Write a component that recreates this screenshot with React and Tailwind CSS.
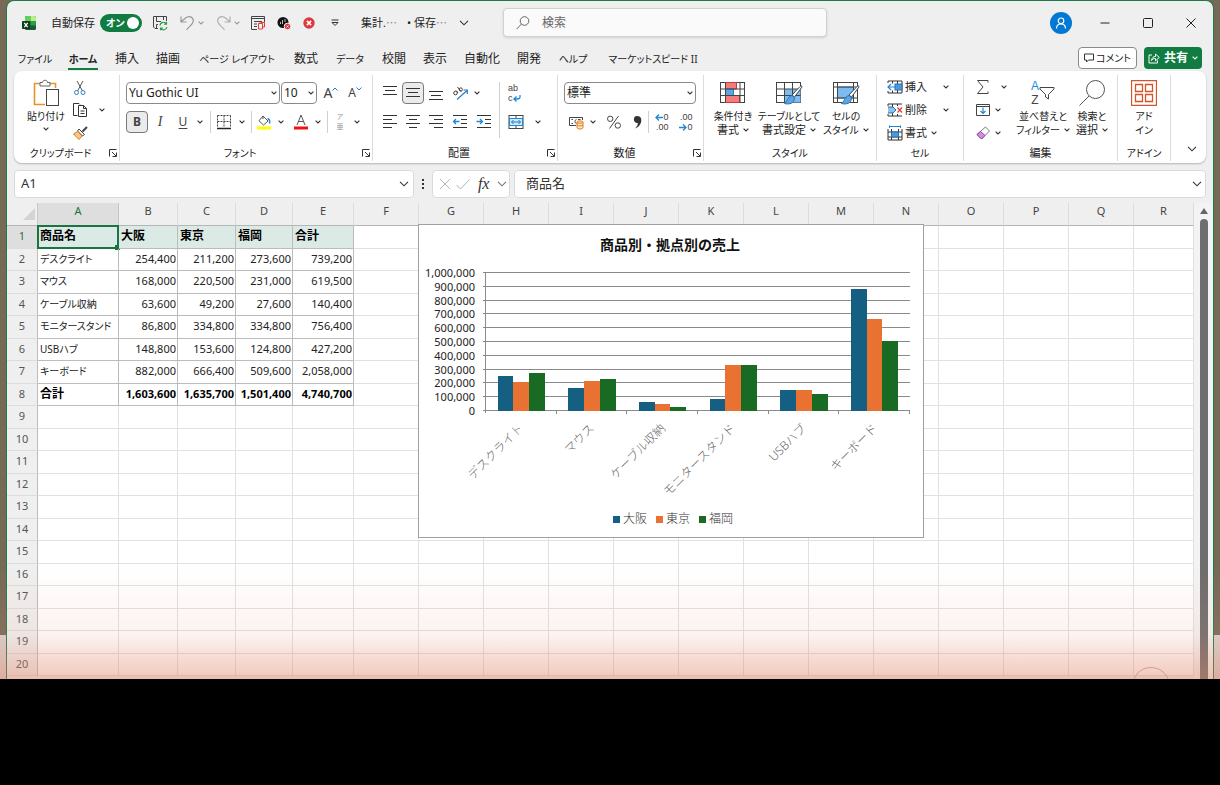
import React, { useState } from 'react';

const TABS = [
  { label: 'ファイル', width: 'w-8' },
  { label: 'ホーム', width: 'w-[30px]', active: true },
  { label: '挿入', width: 'w-6' },
  { label: '描画', width: 'w-6' },
  { label: 'ページ レイアウト', width: 'w-20' },
  { label: '数式', width: 'w-6' },
  { label: 'データ', width: 'w-[30px]' },
  { label: '校閲', width: 'w-6' },
  { label: '表示', width: 'w-6' },
  { label: '自動化', width: 'w-9' },
  { label: '開発', width: 'w-6' },
  { label: 'ヘルプ', width: 'w-[30px]' },
  { label: 'マーケットスピード II', width: 'w-24' },
];

const COLUMNS = 'ABCDEFGHIJKLMNOPQR'.split('');

const SHEET = [
  ['商品名', '大阪', '東京', '福岡', '合計'],
  ['デスクライト', 254400, 211200, 273600, 739200],
  ['マウス', 168000, 220500, 231000, 619500],
  ['ケーブル収納', 63600, 49200, 27600, 140400],
  ['モニタースタンド', 86800, 334800, 334800, 756400],
  ['USBハブ', 148800, 153600, 124800, 427200],
  ['キーボード', 882000, 666400, 509600, 2058000],
  ['合計', 1603600, 1635700, 1501400, 4740700],
];

const ROW_COUNT = 20;
const SERIES = [
  { name: '大阪', color: '#156082' },
  { name: '東京', color: '#e97132' },
  { name: '福岡', color: '#196b24' },
];

const format = (n) => n.toLocaleString('en-US');
const hasKana = (text) => /[ぁ-ー]/.test(text);
// kana captions are set a size smaller than kanji ones
const captionSize = (text) => (hasKana(text) ? 'text-[10px]' : 'text-[11px]');

/* ---------- small pieces ---------- */

function Svg({ className = 'w-4 h-4', box = '0 0 16 16', children }) {
  return (
    <svg className={`shrink-0 ${className}`} viewBox={box} fill="none" stroke="#444" strokeWidth={1} aria-hidden="true">
      {children}
    </svg>
  );
}

function Chevron({ large = false, color = '#333' }) {
  return (
    <svg
      className={large ? 'w-[10px] h-[6px] shrink-0' : 'w-[6px] h-[4px] shrink-0'}
      viewBox={large ? '0 0 10 6' : '0 0 6 4'}
      fill="none"
      stroke={color}
      aria-hidden="true"
    >
      <path d={large ? 'M1 0.8 L5 4.8 L9 0.8' : 'M0.6 0.6 L3 3 L5.4 0.6'} strokeWidth="1.1" />
    </svg>
  );
}

function Tool({ label, className = 'w-6 h-[22px]', pressed = false, children }) {
  return (
    <button
      type="button"
      aria-label={label}
      className={`flex shrink-0 items-center justify-center ${className} ${
        pressed ? 'rounded border border-[#7a7a7a] bg-[#ebebeb]' : ''
      }`}
    >
      {children}
    </button>
  );
}

function More({ label, className = 'w-3 h-[22px]', color }) {
  return (
    <Tool label={label} className={className}>
      <Chevron color={color} />
    </Tool>
  );
}

function Group({ title, width, launcher = false, children }) {
  return (
    <section className={`flex shrink-0 flex-col pb-0.5 pt-1 ${width}`} aria-label={title}>
      <div className="flex min-h-0 flex-1 border-r border-[#dcdcdc]">{children}</div>
      <div className="flex h-4 shrink-0 items-center border-r border-[#dcdcdc]">
        <span className={`flex-1 text-center leading-4 ${captionSize(title)}`}>{title}</span>
        {launcher && (
          <Tool label={`${title}の設定`} className="w-3 h-4">
            <Svg className="h-2 w-2" box="0 0 8 8">
              <path d="M0.5 7.5 V0.5 H7.5 M3 3 L7 7 M7.5 3.5 V7.5 H3.5" stroke="#333" />
            </Svg>
          </Tool>
        )}
      </div>
    </section>
  );
}

function Combo({ label, value, className }) {
  return (
    <div className={`relative h-[22px] ${className}`}>
      <select
        aria-label={label}
        className="block h-full w-full appearance-none rounded border border-[#8a8a8a] bg-white pl-0.5 text-xs leading-4 text-[#222]"
      >
        <option>{value}</option>
      </select>
      <span className="pointer-events-none absolute inset-y-0 right-[3px] flex items-center">
        <Chevron />
      </span>
    </div>
  );
}

function BigButton({ icon, lines, width, chevron = true }) {
  return (
    <button type="button" className={`flex shrink-0 flex-col items-center pt-1 ${width}`}>
      <span className="flex h-7 items-center justify-center">{icon}</span>
      <span className={`mt-0.5 whitespace-nowrap leading-[14px] ${captionSize(lines[0])}`}>{lines[0]}</span>
      <span className={`flex items-center gap-1 whitespace-nowrap leading-[14px] ${captionSize(lines[1])}`}>
        {lines[1]}
        {chevron && <Chevron />}
      </span>
    </button>
  );
}

function Divider({ className = 'h-[22px]' }) {
  return <span className={`w-px shrink-0 bg-[#d0d0d0] ${className}`} />;
}

function Lines({ rows }) {
  return (
    <Svg>
      {rows.map(([x1, x2, y]) => (
        <path key={y} d={`M${x1} ${y} H${x2}`} stroke="#333" />
      ))}
    </Svg>
  );
}

/* ---------- title bar ---------- */

function Ellipsis() {
  return <span className="font-['Noto_Sans_CJK_JP',sans-serif] text-[#888] [font-feature-settings:normal]">…</span>;
}

function TitleBar() {
  const [autoSave, setAutoSave] = useState(true);

  return (
    <header className="flex h-[43px] items-center">
      <div className="flex w-[496px] shrink-0 items-center pl-3.5">
        <Svg className="h-4 w-4">
          <rect x="4" y="1" width="11" height="14" rx="1.5" fill="#185c37" stroke="none" />
          <path d="M5.500 1 H9.500 V6 H4 V2.500 A1.500 1.500 0 0 1 5.500 1Z" fill="#5fd35a" stroke="none" />
          <path d="M9.500 1 H13.500 A1.500 1.500 0 0 1 15 2.500 V6 H9.500Z" fill="#b5f08a" stroke="none" />
          <rect x="9.500" y="6" width="5.500" height="4.500" fill="#2f9e3f" stroke="none" />
          <rect x="1" y="6" width="8" height="8" rx="1" fill="#0a3d22" stroke="none" />
          <path d="M3.300 7.800 L6.700 12.200 M6.700 7.800 L3.300 12.200" stroke="#fff" strokeWidth="1.300" />
        </Svg>
        <label htmlFor="autosave" className="ml-3.5 w-11 whitespace-nowrap text-[11px] leading-4">
          自動保存
        </label>
        <span className="relative ml-[5px] flex h-[18px] w-[42px] items-center rounded-full bg-[#107c41] pl-1.5">
          <input
            id="autosave"
            type="checkbox"
            checked={autoSave}
            onChange={(e) => setAutoSave(e.target.checked)}
            className="absolute inset-0 h-full w-full appearance-none rounded-full"
          />
          <span className="text-[10px] font-bold leading-4 text-white">オン</span>
          <span className="ml-auto mr-[3px] h-3 w-3 rounded-full bg-white" />
        </span>

        <Tool label="上書き保存" className="ml-2.5 h-5 w-4">
          <Svg>
            <path d="M6 13.500 H3 L1.500 12 V1.500 H14.500 V6 M4.500 1.500 V6.500 H9 M11.500 1.500 V5 M4.500 13 V9.500 H6" />
            <path d="M8 10.500 A3.500 3.500 0 0 1 14.500 9 M14.500 6.800 V9.200 H12 M15 12 A3.500 3.500 0 0 1 8.700 13.300 M8.500 15.300 V13 H11" stroke="#2b9a4b" strokeWidth="1.200" />
          </Svg>
        </Tool>
        <Tool label="元に戻す" className="ml-3 h-5 w-4">
          <Svg>
            <path d="M1 1.500 V7 H6.500 M1.200 6.800 L5.500 3 C8.500 0.500 13 1.500 13.300 5.500 C13.500 9 10 10.500 6.500 15" stroke="#999" strokeWidth="1.200" />
          </Svg>
        </Tool>
        <More label="元に戻す履歴" className="h-[22px] w-2.5" color="#999" />
        <Tool label="やり直し" className="ml-2.5 h-5 w-4">
          <Svg>
            <path d="M14 1.500 V7 H8.500 M13.800 6.800 L9.500 3 C6.500 0.500 2 1.500 1.700 5.500 C1.500 9 5 10.500 8.500 15" stroke="#b0b0b0" strokeWidth="1.200" />
          </Svg>
        </Tool>
        <More label="やり直し履歴" className="h-[22px] w-2.5" color="#999" />
        <Tool label="フォーム" className="ml-2 h-5 w-4">
          <Svg>
            <path d="M7 14.500 H1.500 V1.500 H14.500 V7 M1.500 3.500 H14.500 M4 6.500 H12 M4 9 H7 M4 11.500 H7" />
            <path d="M8.500 8.500 H12.500 V14 H8.500Z M10 8.500 V7 M12.500 12 H14.500 V7.500 H11" stroke="#e03c3c" />
          </Svg>
        </Tool>
        <Tool label="マクロの記録" className="ml-[11px] h-5 w-[14px]">
          <Svg className="h-[14px] w-[14px]" box="0 0 14 14">
            <circle cx="6" cy="6.500" r="5.500" fill="#111" stroke="none" />
            <path d="M3.500 6 V8 M5.500 4 V8 M8 3 V6" stroke="#bbb" />
            <circle cx="10.500" cy="10.500" r="3.300" fill="#d9363e" stroke="#efefef" />
            <path d="M9.500 9.500 L11.500 11.500 M11.500 9.500 L9.500 11.500" stroke="#fff" strokeWidth="0.800" />
          </Svg>
        </Tool>
        <Tool label="中止" className="ml-3 h-5 w-3">
          <Svg className="h-3 w-3" box="0 0 12 12">
            <circle cx="6" cy="6" r="5.700" fill="#dc3a3f" stroke="none" />
            <path d="M3.900 3.900 L8.100 8.100 M8.100 3.900 L3.900 8.100" stroke="#fff" strokeWidth="1.600" />
          </Svg>
        </Tool>
        <Tool label="クイック アクセスのカスタマイズ" className="ml-4 h-5 w-2">
          <Svg className="h-2 w-2" box="0 0 8 8">
            <path d="M0.500 1 H7.500 M1 3.500 H7 L4 6.500Z" stroke="#333" />
          </Svg>
        </Tool>
        <div className="ml-[22px] flex w-[86px] items-center justify-between whitespace-nowrap text-[11px] leading-4">
          <span>集計.<Ellipsis /></span>
          <span>• 保存<Ellipsis /></span>
        </div>
        <Tool label="ファイル情報" className="ml-3 h-5 w-[10px]">
          <Chevron large />
        </Tool>
      </div>

      <label className="flex h-[29px] w-[324px] shrink-0 items-center gap-3 rounded border border-[#d1d1d1] bg-[#fafafa] pl-3 shadow-sm">
        <Svg className="h-[14px] w-[14px]" box="0 0 14 14">
          <circle cx="8.500" cy="5" r="4.300" stroke="#666" />
          <path d="M5.500 8 L0.700 13" stroke="#666" />
        </Svg>
        <input
          type="text"
          placeholder="検索"
          aria-label="検索"
          className="min-w-0 flex-1 bg-transparent text-xs text-[#333] outline-none placeholder:text-[#666]"
        />
      </label>

      <div className="flex flex-1 items-center justify-end pr-px">
        <button type="button" aria-label="アカウント" className="mr-[11px] flex h-[22px] w-[22px] items-center justify-center rounded-full bg-[#0078d4]">
          <Svg className="h-3 w-3" box="0 0 12 12">
            <circle cx="6" cy="3.800" r="2.800" stroke="#fff" strokeWidth="1.200" />
            <path d="M1.500 11.500 C1.500 8 3.500 7 6 7 C8.500 7 10.500 8 10.500 11.500" stroke="#fff" strokeWidth="1.200" />
          </Svg>
        </button>
        <Tool label="最小化" className="h-8 w-[43px]">
          <Svg className="h-[10px] w-[10px]" box="0 0 10 10"><path d="M0.500 5 H9.500" stroke="#222" /></Svg>
        </Tool>
        <Tool label="元のサイズに戻す" className="h-8 w-[43px]">
          <Svg className="h-[10px] w-[10px]" box="0 0 10 10"><rect x="0.500" y="0.500" width="9" height="9" rx="1" stroke="#222" /></Svg>
        </Tool>
        <Tool label="閉じる" className="h-8 w-[43px]">
          <Svg className="h-[10px] w-[10px]" box="0 0 10 10"><path d="M0.500 0.500 L9.500 9.500 M9.500 0.500 L0.500 9.500" stroke="#222" /></Svg>
        </Tool>
      </div>
    </header>
  );
}

function TabRow() {
  return (
    <div className="flex h-[27px] items-center pl-3 pr-[11px]">
      <nav className="flex flex-1 items-center gap-[17px]">
        {TABS.map((tab) => (
          <button
            key={tab.label}
            type="button"
            className={`flex h-6 shrink-0 items-center justify-center whitespace-nowrap border-b-2 pt-1 leading-4 ${tab.width} ${
              tab.active ? 'border-[#107c41] font-bold' : 'border-transparent'
            } ${hasKana(tab.label) ? 'text-[10px]' : 'text-xs'}`}
          >
            {tab.label}
          </button>
        ))}
      </nav>
      <button
        type="button"
        className="flex h-[22px] w-[59px] items-center justify-center gap-0.5 whitespace-nowrap rounded border border-[#8a8a8a] bg-white text-[10px] leading-4"
      >
        <Svg className="h-[10px] w-[10px]" box="0 0 10 10">
          <path d="M0.500 1 H9.500 V7 H4.500 L2.500 9 V7 H0.500Z" stroke="#333" />
        </Svg>
        コメント
      </button>
      <button
        type="button"
        className="ml-[7px] flex h-[22px] w-[58px] items-center justify-center gap-1 whitespace-nowrap rounded bg-[#107c41] text-xs leading-4 font-bold text-white"
      >
        <Svg className="h-3 w-3" box="0 0 12 12">
          <path d="M4 3 H1 V11 H9.500 V8.500 M3.500 8.500 C4 5.500 5.500 4.500 7.500 4.500 V2 L11.300 5.500 L7.500 8.800 V6.500 C5.500 6.500 4.500 7 3.500 8.500Z" stroke="#fff" />
        </Svg>
        共有
        <Chevron color="#fff" />
      </button>
    </div>
  );
}

/* ---------- ribbon ---------- */

function GridIcon({ children }) {
  return (
    <Svg className="h-[26px] w-7" box="0 0 28 26">
      <rect x="1.500" y="2.500" width="24" height="20" fill="#fff" />
      {children}
    </Svg>
  );
}

function Brush() {
  return (
    <>
      <path d="M27 7 L19.500 17 L17 15 L25 6.500 C26 5.500 27.500 6 27 7Z" fill="#fff" stroke="#444" />
      <path d="M16.800 15.500 C19 16 20 18 19 20.500 C17.500 24 13 24.500 9.500 23.500 C12.500 22 12 17 16.800 15.500Z" fill="#5ea4e0" stroke="#2a6fb0" />
    </>
  );
}

function ClipboardGroup() {
  return (
    <Group title="クリップボード" width="w-[106px]" launcher>
      <button type="button" className="ml-2 flex w-12 flex-col items-center pt-1">
        <Svg className="h-7 w-7" box="0 0 28 28">
          <path d="M8 4.500 H2.500 V25.500 H13 M18 4.500 H23.500 V9" stroke="#e8912d" strokeWidth="1.600" />
          <path d="M8 7 V3.500 H10.500 C10.500 0.500 15.500 0.500 15.500 3.500 H18 V7Z" fill="#fff" stroke="#666" />
          <rect x="14.500" y="10.500" width="12" height="16" fill="#fff" stroke="#444" />
        </Svg>
        <span className="mt-0.5 whitespace-nowrap text-[10px] leading-[14px]">貼り付け</span>
        <span className="mt-1 flex"><Chevron /></span>
      </button>
      <div className="flex flex-col pt-0.5">
        <Tool label="切り取り" className="h-[22px] w-5">
          <Svg>
            <path d="M5 1 L10.500 11 M11 1 L5.500 11" stroke="#555" />
            <circle cx="4.500" cy="12.500" r="2" stroke="#2a7fc9" />
            <circle cx="11" cy="12.500" r="2" stroke="#2a7fc9" />
          </Svg>
        </Tool>
        <span className="flex items-center">
          <Tool label="コピー" className="h-[22px] w-5">
            <Svg>
              <path d="M5.500 13.500 H1.500 V1.500 H7 L8 2.500" stroke="#333" />
              <path d="M6.500 3.500 H11.500 L14.500 6.500 V14.500 H6.500Z M11.500 3.500 V6.500 H14.500 M8.500 9 H12.500 M8.500 11.500 H12.500" stroke="#333" />
            </Svg>
          </Tool>
          <More label="コピーのオプション" className="ml-1.5 h-[22px] w-3" />
        </span>
        <Tool label="書式のコピー" className="h-6 w-5">
          <Svg>
            <path d="M15 2 L10.500 6.500" stroke="#444" strokeWidth="2" />
            <path d="M7 4 L12.500 9.500 L10.500 11 L5.500 6Z" fill="#fff" stroke="#444" />
            <path d="M5.500 6.500 L1.500 9 L7 14.500 L10 11Z" fill="#f7c78b" stroke="#e07b1a" />
          </Svg>
        </Tool>
      </div>
    </Group>
  );
}

function FontGroup() {
  return (
    <Group title="フォント" width="w-[253px]" launcher>
      <div className="flex flex-col gap-[7px] pl-[6px] pt-[7px]">
        <div className="flex items-center">
          <Combo label="フォント名" value="Yu Gothic UI" className="w-[154px]" />
          <Combo label="フォント サイズ" value="10" className="ml-px w-9" />
          <Tool label="フォント サイズの拡大" className="ml-1 h-[22px] w-5">
            <span className="text-sm leading-5 text-[#444]">A</span>
            <Svg className="mb-2 h-1 w-[6px]" box="0 0 6 4"><path d="M0.500 3.500 L3 1 L5.500 3.500" stroke="#2a7fc9" /></Svg>
          </Tool>
          <Tool label="フォント サイズの縮小" className="ml-1 h-[22px] w-5">
            <span className="text-xs leading-5 text-[#444]">A</span>
            <Svg className="mb-2 h-1 w-[6px]" box="0 0 6 4"><path d="M0.500 0.500 L3 3 L5.500 0.500" stroke="#2a7fc9" /></Svg>
          </Tool>
        </div>
        <div className="flex items-center">
          <Tool label="太字" pressed className="h-[22px] w-[22px]">
            <span className="text-xs font-bold text-[#444]">B</span>
          </Tool>
          <Tool label="斜体">
            <span className="font-['Liberation_Serif',serif] text-sm italic text-[#444]">I</span>
          </Tool>
          <Tool label="下線" className="h-[22px] w-[22px]">
            <span className="text-xs text-[#444] underline underline-offset-2">U</span>
          </Tool>
          <More label="下線の種類" />
          <span className="w-1" />
          <Divider />
          <Tool label="罫線" className="ml-px h-[22px] w-6">
            <Svg>
              <path d="M1.500 1.500 H14.500 M1.500 1.500 V13 M14.500 1.500 V13 M8 1.500 V13 M1.500 7.500 H14.500" stroke="#444" strokeDasharray="2 1" />
              <path d="M1 14.500 H15" stroke="#222" strokeWidth="1.500" />
            </Svg>
          </Tool>
          <More label="罫線の種類" />
          <span className="w-[3px]" />
          <Divider />
          <Tool label="塗りつぶしの色">
            <Svg>
              <path d="M7 2 L12 7 L7.500 11 L3 6.800Z M7 2 V5" stroke="#555" />
              <path d="M11.500 4.500 C13.500 5 14 7 13.500 9.500" stroke="#2a7fc9" strokeWidth="1.500" />
              <rect x="1" y="12.500" width="14" height="3" fill="#ffff00" stroke="none" />
            </Svg>
          </Tool>
          <More label="塗りつぶしの色の一覧" className="h-[22px] w-2.5" />
          <Tool label="フォントの色" className="ml-[3px] h-[22px] w-6">
            <Svg>
              <path d="M4 11 L8 1 L12 11 M5.300 7.500 H10.700" stroke="#555" />
              <rect x="1" y="12.500" width="14" height="3" fill="#ee1111" stroke="none" />
            </Svg>
          </Tool>
          <More label="フォントの色の一覧" className="h-[22px] w-2.5" />
          <span className="w-1" />
          <Divider />
          <Tool label="ふりがな">
            <span className="flex flex-col text-[7px] leading-[10px] text-[#999]">
              <span>ア</span>
              <span>亜</span>
            </span>
          </Tool>
          <More label="ふりがなの設定" className="h-[22px] w-2.5" />
        </div>
      </div>
    </Group>
  );
}

function AlignmentGroup() {
  return (
    <Group title="配置" width="w-[185px]" launcher>
      <div className="flex flex-col gap-[7px] pl-[6px] pt-[7px]">
        <div className="flex items-center gap-px">
          <Tool label="上揃え" className="h-[22px] w-[22px]"><Lines rows={[[1, 15, 1.5], [3, 13, 5.5], [1, 15, 9.5]]} /></Tool>
          <Tool label="上下中央揃え" pressed className="h-[22px] w-[22px]"><Lines rows={[[1, 15, 3.5], [3, 13, 7.5], [1, 15, 11.5]]} /></Tool>
          <Tool label="下揃え" className="h-[22px] w-[22px]"><Lines rows={[[1, 15, 6.5], [3, 13, 10.5], [1, 15, 14.5]]} /></Tool>
          <Tool label="方向">
            <Svg>
              <g stroke="#444">
                <circle cx="3.500" cy="8" r="1.800" />
                <path d="M4 5.500 L6 8" />
                <path d="M5.500 2 L9 6.500" />
                <circle cx="8.800" cy="4.500" r="1.600" />
              </g>
              <path d="M5 14.500 L15 5.500 M11.500 5 H15.300 V9" stroke="#2a7fc9" strokeWidth="1.200" />
            </Svg>
          </Tool>
          <More label="方向の一覧" className="h-[22px] w-2" />
        </div>
        <div className="flex items-center gap-px">
          <Tool label="左揃え" className="h-[22px] w-[22px]"><Lines rows={[[1, 15, 1.5], [1, 10, 5.5], [1, 15, 9.5], [1, 10, 13.5]]} /></Tool>
          <Tool label="中央揃え" className="h-[22px] w-[22px]"><Lines rows={[[1, 15, 1.5], [4, 12, 5.5], [1, 15, 9.5], [4, 12, 13.5]]} /></Tool>
          <Tool label="右揃え" className="h-[22px] w-[22px]"><Lines rows={[[1, 15, 1.5], [6, 15, 5.5], [1, 15, 9.5], [6, 15, 13.5]]} /></Tool>
          <Tool label="インデントを減らす">
            <Svg>
              <path d="M1 1.500 H15 M9 5.500 H15 M9 9.500 H15 M1 13.500 H15" stroke="#333" />
              <path d="M1.500 7.500 H7.500 M4 5 L1.500 7.500 L4 10" stroke="#1e88d8" strokeWidth="1.300" />
            </Svg>
          </Tool>
          <Tool label="インデントを増やす" className="h-[22px] w-[22px]">
            <Svg>
              <path d="M1 1.500 H15 M9 5.500 H15 M9 9.500 H15 M1 13.500 H15" stroke="#333" />
              <path d="M0.500 7.500 H6.500 M4 5 L6.500 7.500 L4 10" stroke="#1e88d8" strokeWidth="1.300" />
            </Svg>
          </Tool>
        </div>
      </div>
      <div className="ml-1 flex items-center"><Divider className="h-14" /></div>
      <div className="flex flex-col gap-[7px] pl-1 pt-[7px]">
        <Tool label="折り返して全体を表示する">
          <span className="flex w-4 flex-col items-start font-['Liberation_Sans',sans-serif] text-[9px] leading-[10px] text-[#444]">
            <span>ab</span>
            <span className="flex items-center">
              c
              <Svg className="h-[7px] w-2" box="0 0 8 7"><path d="M7 0 V2 C7 4 5.500 4 1 4 M3.500 1.500 L1 4 L3.500 6.500" stroke="#1e88d8" strokeWidth="1.300" /></Svg>
            </span>
          </span>
        </Tool>
        <span className="flex items-center">
          <Tool label="セルを結合して中央揃え">
            <Svg>
              <rect x="1" y="1.500" width="14" height="13" fill="#fff" stroke="#444" />
              <path d="M8 1.500 V4 M8 12 V14.500" />
              <rect x="1.500" y="4.500" width="13" height="7" fill="#d3e9fa" stroke="#1e88d8" />
              <path d="M3.500 8 H12.500 M5.500 6 L3.500 8 L5.500 10 M10.500 6 L12.500 8 L10.500 10" stroke="#1e78c0" />
            </Svg>
          </Tool>
          <More label="結合の種類" className="ml-1 h-[22px] w-3" />
        </span>
      </div>
    </Group>
  );
}

function NumberGroup() {
  const digits =
    "flex flex-col items-end font-['Liberation_Sans',sans-serif] text-[9px] leading-[10px] text-[#444]";
  return (
    <Group title="数値" width="w-[146px]" launcher>
      <div className="flex flex-col gap-[7px] pl-[6px] pt-[7px]">
        <Combo label="表示形式" value="標準" className="w-[132px]" />
        <div className="flex items-center">
          <Tool label="通貨表示形式">
            <Svg>
              <path d="M8 11.500 H1.500 V3.500 H14.500 V6" stroke="#444" />
              <path d="M3.500 5.500 H5 M3.500 9.500 H5 M8.500 5.500 C6.500 5.500 6.500 9.500 8.500 9.500 M10 5.500 H12.500" stroke="#444" />
              <path d="M9 8 V13.500 C9 15.500 15 15.500 15 13.500 V8 C15 6.500 9 6.500 9 8 C9 9.500 15 9.500 15 8 M9 10.800 C9 12.200 15 12.200 15 10.800" fill="#fde5cc" stroke="#e07b1a" />
            </Svg>
          </Tool>
          <More label="通貨の種類" className="h-[22px] w-[10px]" />
          <Tool label="パーセント スタイル" className="ml-1 h-[22px] w-6">
            <Svg>
              <circle cx="4.200" cy="4.800" r="2.700" />
              <circle cx="11.800" cy="11.500" r="2.700" />
              <path d="M12.500 2 L3.500 14.500" />
            </Svg>
          </Tool>
          <Tool label="桁区切りスタイル" className="h-[22px] w-[22px]">
            <Svg>
              <path d="M8 2 C12 2 13 5 12 8.500 C11 11.500 9 13.500 6 14.500 C8 12.500 9 11 8.800 9 C4 9.500 3.500 2 8 2Z" fill="#333" stroke="none" />
            </Svg>
          </Tool>
          <Divider />
          <Tool label="小数点以下の表示桁数を増やす" className="ml-0.5 h-[22px] w-[22px]">
            <span className={digits}>
              <span className="flex items-center">
                <Svg className="h-[7px] w-2" box="0 0 8 7"><path d="M8 3.500 H1 M4 0.500 L1 3.500 L4 6.500" stroke="#1e88d8" strokeWidth="1.300" /></Svg>
                0
              </span>
              <span>.00</span>
            </span>
          </Tool>
          <Tool label="小数点以下の表示桁数を減らす" className="ml-0.5 h-[22px] w-[22px]">
            <span className={digits}>
              <span>.00</span>
              <span className="flex items-center">
                <Svg className="h-[7px] w-2" box="0 0 8 7"><path d="M0 3.500 H7 M4 0.500 L7 3.500 L4 6.500" stroke="#1e88d8" strokeWidth="1.300" /></Svg>
                0
              </span>
            </span>
          </Tool>
        </div>
      </div>
    </Group>
  );
}

function StyleGroup() {
  return (
    <Group title="スタイル" width="w-[173px]">
      <BigButton
        width="w-[58px]"
        lines={['条件付き', '書式']}
        icon={
          <GridIcon>
            <path d="M6.500 2.500 H17.500 V9 H6.500Z M6.500 15.500 H20.500 V22.500 H6.500Z" fill="#f47c7c" stroke="#d13438" />
            <rect x="6.500" y="9" width="8" height="6.500" fill="#5ea4e0" stroke="#2a7fc9" />
            <path d="M1.500 9 H25.500 M1.500 15.500 H25.500 M6.500 2.500 V22.500 M21 2.500 V22.500" />
          </GridIcon>
        }
      />
      <BigButton
        width="w-[54px]"
        lines={['テーブルとして', '書式設定']}
        icon={
          <GridIcon>
            <path d="M9.500 9 H25.500 V22.500 H9.500Z" fill="#7dbbf0" stroke="none" />
            <path d="M1.500 9 H25.500 M1.500 15.500 H25.500 M9.500 2.500 V22.500 M17.500 2.500 V22.500" />
            <Brush />
          </GridIcon>
        }
      />
      <BigButton
        width="w-[60px]"
        lines={['セルの', 'スタイル']}
        icon={
          <GridIcon>
            <path d="M5.500 7 H21.500 V18 H5.500Z" fill="#7dbbf0" stroke="#2a7fc9" />
            <path d="M1.500 7 H25.500 M1.500 18 H25.500 M5.500 2.500 V22.500 M21.500 2.500 V22.500" />
            <Brush />
          </GridIcon>
        }
      />
    </Group>
  );
}

function CellsGroup() {
  const row = 'flex h-[23px] items-center text-[11px] leading-4 whitespace-nowrap';
  return (
    <Group title="セル" width="w-[87px]">
      <div className="flex flex-col pl-[10px]">
        <button type="button" className={row}>
          <Svg>
            <path d="M1 2 H15 M1 14 H15 M15 2 V14 M1 2 V4 M1 12 V14 M5.500 2 V4.500 M10.500 2 V14 M5.500 11.500 V14" stroke="#333" />
            <rect x="8" y="5" width="7" height="6" fill="#4a9be0" stroke="#2a6fb0" />
            <path d="M8 8 H1 M4 5 L1 8 L4 11" stroke="#1e88d8" strokeWidth="1.200" />
          </Svg>
          <span className="ml-0.5 w-[38px] text-left">挿入</span>
          <Chevron />
        </button>
        <button type="button" className={row}>
          <Svg>
            <path d="M1 2 H15 M1 14 H15 M1 2 V4 M1 12 V14 M5.500 2 V5 M10.500 2 V4 M5.500 11 V14 M10.500 12 V14" stroke="#333" />
            <path d="M1 5 H6 L9 8 L6 11 H1" fill="#8cc3ee" stroke="#2a6fb0" />
            <path d="M10.500 5.500 L15 10.500 M15 5.500 L10.500 10.500" stroke="#e03c3c" strokeWidth="1.200" />
          </Svg>
          <span className="ml-0.5 w-[38px] text-left">削除</span>
          <Chevron />
        </button>
        <button type="button" className={row}>
          <Svg>
            <path d="M1 4 V15 H15 V4 M1 7 H15 M1 12 H15 M4.500 4 V15 M11.500 4 V15" stroke="#333" />
            <rect x="4.500" y="7" width="7" height="5" fill="#4a9be0" stroke="#2a6fb0" />
            <path d="M2.500 1.500 H13.500 M2.500 0.500 V3 M13.500 0.500 V3" stroke="#1e88d8" />
          </Svg>
          <span className="ml-0.5 w-[26px] text-left">書式</span>
          <Chevron />
        </button>
      </div>
    </Group>
  );
}

function EditGroup() {
  return (
    <Group title="編集" width="w-[154px]">
      <div className="flex w-[50px] flex-col pl-[7px]">
        <span className="flex h-[23px] items-center">
          <Tool label="オート SUM">
            <Svg><path d="M13 3.500 V1.500 H2.500 L8 8 L2.500 14.500 H13 V12.500" stroke="#444" /></Svg>
          </Tool>
          <More label="集計の種類" className="ml-[3px] h-[22px] w-3" />
        </span>
        <span className="flex h-[23px] items-center">
          <Tool label="フィル">
            <Svg>
              <path d="M1.500 2.500 H14.500 V13.500 H1.500Z M1.500 4.500 H14.500" stroke="#444" />
              <path d="M8 5.500 V11.500 M5.500 9 L8 11.500 L10.500 9" stroke="#1e88d8" strokeWidth="1.200" />
            </Svg>
          </Tool>
          <More label="フィルの種類" className="h-[22px] w-1.5" />
        </span>
        <span className="flex h-[23px] items-center">
          <Tool label="クリア">
            <Svg>
              <path d="M10.500 2 L14.500 6 L6.500 14 L2 9.500Z" fill="#fff" stroke="#777" />
              <path d="M5.500 6.500 L10 10.500 L6.500 14 L2 9.500Z" fill="#cf8fdc" stroke="#9b3fb0" />
            </Svg>
          </Tool>
          <More label="クリアの種類" className="h-[22px] w-1.5" />
        </span>
      </div>
      <BigButton
        width="w-[58px]"
        lines={['並べ替えと', 'フィルター']}
        icon={
          <span className="flex items-center">
            <span className="flex flex-col font-['Liberation_Sans',sans-serif] text-xs leading-[14px]">
              <span className="text-[#1e88d8]">A</span>
              <span className="text-[#444]">Z</span>
            </span>
            <Svg><path d="M1 2.500 H15 V4 L9.500 9.500 V14 L6.500 12 V9.500 L1 4Z" stroke="#444" /></Svg>
          </span>
        }
      />
      <BigButton
        width="w-10"
        lines={['検索と', '選択']}
        icon={
          <Svg className="h-7 w-7" box="0 0 28 28">
            <circle cx="17.500" cy="10.500" r="9" stroke="#555" />
            <path d="M11 17 L1.500 26.500" stroke="#555" />
          </Svg>
        }
      />
    </Group>
  );
}

function Ribbon() {
  return (
    <div className="mx-[7px] flex h-[92px] rounded-lg bg-white shadow-[0_1px_2px_rgba(0,0,0,0.25)]">
      <ClipboardGroup />
      <FontGroup />
      <AlignmentGroup />
      <NumberGroup />
      <StyleGroup />
      <CellsGroup />
      <EditGroup />
      <Group title="アドイン" width="w-[53px]">
        <BigButton
          width="w-[52px]"
          chevron={false}
          lines={['アド', 'イン']}
          icon={
            <Svg className="h-[26px] w-[26px]" box="0 0 26 26">
              <path d="M0.500 0.500 H25.500 V25.500 H0.500Z M4.500 4.500 H11.500 V11.500 H4.500Z M14.500 4.500 H21.500 V11.500 H14.500Z M4.500 14.500 H11.500 V21.500 H4.500Z M14.500 14.500 H21.500 V21.500 H14.500Z" stroke="#d4552b" strokeWidth="1.300" />
            </Svg>
          }
        />
      </Group>
      <div className="flex flex-1 items-end justify-end pb-[9px] pr-[9px]">
        <Tool label="リボンを折りたたむ" className="h-[10px] w-[10px]">
          <Chevron large />
        </Tool>
      </div>
    </div>
  );
}

/* ---------- formula bar ---------- */

function FormulaBar() {
  const [formula, setFormula] = useState('商品名');
  const box = 'flex items-center rounded border border-[#dadada] bg-white';

  return (
    <div className="mx-[7px] mt-[7px] flex h-7">
      <div className={`${box} w-[400px] shrink-0 pl-1.5 pr-1`}>
        <input type="text" aria-label="名前ボックス" defaultValue="A1" className="min-w-0 flex-1 text-[13px] text-[#333] outline-none" />
        <Tool label="名前の一覧" className="h-5 w-[10px]">
          <Chevron large />
        </Tool>
      </div>
      <span className="flex w-[18px] shrink-0 items-center justify-center">
        <Svg className="h-[10px] w-[2px]" box="0 0 2 10">
          <path d="M1 0 V2 M1 4 V6 M1 8 V10" stroke="#333" strokeWidth="2" />
        </Svg>
      </span>
      <div className={`${box} w-[78px] shrink-0 justify-between pl-1.5 pr-0.5`}>
        <Tool label="キャンセル" className="h-5 w-3">
          <Svg className="h-3 w-3" box="0 0 12 12"><path d="M1 1 L11 11 M11 1 L1 11" stroke="#b5b5b5" /></Svg>
        </Tool>
        <Tool label="入力" className="h-5 w-[14px]">
          <Svg className="h-[14px] w-[14px]" box="0 0 14 14"><path d="M0.500 8 L4.500 12 L13.500 2.500" stroke="#b5b5b5" /></Svg>
        </Tool>
        <Tool label="関数の挿入" className="h-5 w-4">
          <span className="font-['Liberation_Serif',serif] text-base leading-5 italic text-[#333]">fx</span>
        </Tool>
        <Chevron large color="#777" />
      </div>
      <div className={`${box} ml-1 min-w-0 flex-1 pl-[11px] pr-[3px]`}>
        <input
          type="text"
          aria-label="数式バー"
          value={formula}
          onChange={(e) => setFormula(e.target.value)}
          className="min-w-0 flex-1 text-[13px] text-[#333] outline-none"
        />
        <Tool label="数式バーの展開" className="h-5 w-[10px]">
          <Chevron large />
        </Tool>
      </div>
    </div>
  );
}

/* ---------- sheet ---------- */

function Chart() {
  const items = SHEET.slice(1, 7);
  const left = 67;
  const right = 491;
  const zero = 186;
  const top = 48;
  const step = (right - left) / items.length;
  const barTop = (v) => Math.round(zero - (v / 1000000) * (zero - top));

  return (
    <figure className="absolute left-[411px] top-[21px] border border-[#a0a0a0] bg-white [font-feature-settings:normal]">
      <svg className="h-[312px] w-[504px]" viewBox="0 0 504 312" role="img" aria-label="商品別・拠点別の売上">
        <text x="251" y="25" textAnchor="middle" className="fill-[#111] text-sm font-bold">
          商品別・拠点別の売上
        </text>
        {Array.from({ length: 11 }, (_, i) => {
          const y = barTop(i * 100000);
          return (
            <g key={i}>
              <path d={`M${left - 3} ${y - 0.5} H${right}`} stroke="#8a8a8a" />
              <text x="56" y={y + 4} textAnchor="end" className="fill-[#222] text-[11px]">
                {format(i * 100000)}
              </text>
            </g>
          );
        })}
        <path d={`M${left - 0.5} ${top} V${zero + 2}`} stroke="#8a8a8a" />
        {items.map(([name, ...values], i) => {
          const x = left + i * step;
          return (
            <g key={name}>
              {SERIES.map((s, k) => {
                const x1 = Math.round(x + 11.5 + k * 15.8);
                const x2 = Math.round(x + 11.5 + (k + 1) * 15.8);
                const y = barTop(values[k]);
                return <rect key={s.name} x={x1} y={y} width={x2 - x1} height={zero - y} fill={s.color} />;
              })}
              <path d={`M${Math.round(x + step) - 0.5} ${zero} V${zero + 3}`} stroke="#8a8a8a" />
              <text
                transform={`translate(${Math.round(x + step / 2) + 3} ${zero + 18}) rotate(-45)`}
                textAnchor="end"
                className="fill-[#666] text-xs font-light"
              >
                {name}
              </text>
            </g>
          );
        })}
        {SERIES.map((s, i) => (
          <g key={s.name}>
            <rect x={194 + i * 43} y="291" width="7" height="7" fill={s.color} />
            <text x={204 + i * 43} y="298" className="fill-[#333] text-xs font-light">
              {s.name}
            </text>
          </g>
        ))}
      </svg>
    </figure>
  );
}

function Cell({ row, col }) {
  const value = SHEET[row]?.[col];

  if (value === undefined) {
    return <td className="border-b border-r border-[#e1e1e1]" />;
  }

  const header = row === 0;
  const strong = header || row === 7;
  const isNumber = typeof value === 'number';
  const size = isNumber ? 'text-[11px]' : hasKana(value) ? 'text-[10px]' : 'text-xs';
  return (
    <td
      className={`relative whitespace-nowrap border-b border-r border-[#bcbcbc] p-0 pb-0.5 leading-4 ${size} ${
        header ? 'bg-[#dceae6]' : ''
      } ${strong ? 'font-bold text-black' : 'text-[#222]'} ${isNumber ? 'pr-px text-right' : 'pl-0.5 text-left'}`}
    >
      {isNumber ? format(value) : value}
      {row === 0 && col === 0 && (
        <span className="pointer-events-none absolute -inset-px border-2 border-[#1a7343]">
          <span className="absolute -bottom-[3px] -right-[3px] h-[5px] w-[5px] bg-[#1a7343]" />
        </span>
      )}
    </td>
  );
}

function Sheet() {
  return (
    <div className="mt-[5px] flex min-h-0 flex-1">
      <div className="relative min-w-0 flex-1 overflow-hidden">
        <table className="w-full table-fixed border-separate border-spacing-0 bg-white">
          <colgroup>
            <col className="w-[31px]" />
            <col className="w-[81px]" />
            <col className="w-[59px]" />
            <col className="w-[58px]" />
            <col className="w-[57px]" />
            <col className="w-[61px]" />
            {COLUMNS.slice(5, 17).map((c) => (
              <col key={c} className="w-[65px]" />
            ))}
            <col />
          </colgroup>
          <thead>
            <tr className="h-[23px] bg-[#efefef]">
              <th className="border-b border-r border-b-[#b5b5b5] border-r-[#c8c8c8] p-0">
                <Svg className="ml-auto mr-0.5 h-3 w-3" box="0 0 12 12">
                  <path d="M12 0 V12 H0Z" fill="#d4d4d4" stroke="none" />
                </Svg>
              </th>
              {COLUMNS.map((c) => (
                <th
                  key={c}
                  scope="col"
                  className={`border-b border-r p-0 pb-1.5 text-[11px] leading-4 font-normal ${
                    c === 'A'
                      ? 'border-b-[#1a7343] border-r-[#c4c4c4] bg-[#dedede] text-[#1a7343]'
                      : 'border-b-[#b5b5b5] border-r-[#dcdcdc] text-[#444]'
                  }`}
                >
                  {c}
                </th>
              ))}
            </tr>
          </thead>
          <tbody>
            {Array.from({ length: ROW_COUNT }, (_, row) => (
              <tr key={row} className="odd:h-[23px] even:h-[22px]">
                <th
                  scope="row"
                  className={`border-b border-r border-b-[#dcdcdc] border-r-[#bcbcbc] p-0 pb-0.5 text-[11px] leading-4 font-normal ${
                    row === 0 ? 'bg-[#dedede] text-[#1a7343]' : 'bg-[#efefef] text-[#555]'
                  }`}
                >
                  {row + 1}
                </th>
                {COLUMNS.map((c, col) => (
                  <Cell key={c} row={row} col={col} />
                ))}
              </tr>
            ))}
          </tbody>
        </table>
        <Chart />
      </div>
      <div className="flex w-[19px] shrink-0 flex-col items-center bg-[#f3f3f3] pt-[5px]">
        <Svg className="h-[6px] w-2" box="0 0 8 6">
          <path d="M4 0 L8 6 H0Z" fill="#666" stroke="none" />
        </Svg>
        <span className="mt-[5px] w-2 flex-1 rounded-t-full bg-[#6e6e6e]" />
      </div>
    </div>
  );
}

export default function App() {
  return (
    <div className="flex h-screen flex-col bg-black font-['Noto_Sans','Noto_Sans_CJK_JP',sans-serif] text-[#222] [font-feature-settings:'palt']">
      <div className="relative flex min-h-0 flex-1 overflow-hidden bg-[linear-gradient(to_bottom,#766a57_calc(100%-44px),#d8d0cd_calc(100%-44px))] px-[6px]">
        <main className="flex min-w-0 flex-1 flex-col overflow-hidden rounded-t-lg border-x border-t border-[#1f7a4a] bg-[#efefef]">
          <TitleBar />
          <TabRow />
          <Ribbon />
          <FormulaBar />
          <Sheet />
        </main>
        {/* warm tint rising from the bottom edge */}
        <div className="pointer-events-none absolute inset-x-0 bottom-0 h-28 overflow-hidden bg-linear-to-b from-[#e89a83]/0 via-[#e89a83]/12 via-60% to-[#e28468]/45">
          <span className="absolute -bottom-[26px] right-[50px] h-[38px] w-[38px] rounded-full border border-[#c9a096]" />
        </div>
      </div>
      <footer className="h-[106px] shrink-0 bg-black" />
    </div>
  );
}
